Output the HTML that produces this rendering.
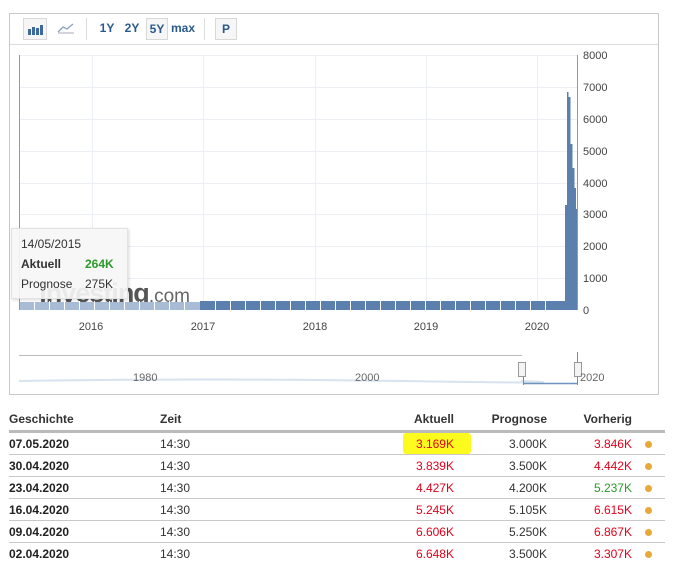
<!DOCTYPE html>
<html><head><meta charset="utf-8"><style>
body{margin:0;width:673px;height:571px;background:#fff;font-family:"Liberation Sans",Arial,sans-serif;position:relative;overflow:hidden}
.abs{position:absolute}
.btn{position:absolute;top:18px;height:20px;font-size:12px;font-weight:bold;color:#2a5a8c;line-height:20px;text-align:center}
.box{border:1px solid #d8d8d8;background:#f6f6f6}
table{position:absolute;left:9px;top:408px;width:656px;border-collapse:collapse;font-size:12px}
td,th{height:21px;padding:0;border-bottom:1px solid #c8c8c8}
th{font-weight:bold;color:#333;text-align:left;height:22px;border-bottom:3px solid #bbb}
td.d{font-weight:bold;color:#222}
td.t{color:#333}
.r{text-align:right}
.red{color:#e3001b}.grn{color:#2b9a2b}
.dot{display:inline-block;width:7px;height:7px;border-radius:50%;background:#e8a93a}
</style></head><body>
<div class="abs" style="left:9px;top:13px;width:648px;height:380px;border:1px solid #c8c8c8"></div>
<div class="abs" style="left:10px;top:44px;width:648px;height:1px;background:#ddd"></div>
<div class="btn box" style="left:23px;width:22px"><svg width="16" height="12" viewBox="0 0 16 12" style="margin-top:4px"><rect x="1" y="6" width="3" height="6" fill="#3d6a9a"/><rect x="5" y="4" width="3" height="8" fill="#3d6a9a"/><rect x="9" y="5" width="3" height="7" fill="#3d6a9a"/><rect x="13" y="2" width="3" height="10" fill="#3d6a9a"/></svg></div>
<div class="btn" style="left:55px;width:22px"><svg width="18" height="12" viewBox="0 0 18 12" style="margin-top:4px"><path d="M1 10 L6 5 L10 7 L16 2" stroke="#8aa3c0" fill="none" stroke-width="1.3"/><path d="M1 11 H17" stroke="#aab" stroke-width="1"/></svg></div>
<div class="abs" style="left:86px;top:18px;width:1px;height:22px;background:#ddd"></div>
<div class="btn" style="left:97px;width:20px">1Y</div>
<div class="btn" style="left:122px;width:20px">2Y</div>
<div class="btn box" style="left:146px;width:20px">5Y</div>
<div class="btn" style="left:169px;width:28px">max</div>
<div class="abs" style="left:204px;top:18px;width:1px;height:22px;background:#ddd"></div>
<div class="btn box" style="left:215px;width:20px">P</div>

<svg class="abs" style="left:0;top:0" width="673" height="400">
<g stroke="#eceff3" stroke-width="1">
<line x1="19" y1="55.5" x2="577" y2="55.5"/><line x1="19" y1="87.5" x2="577" y2="87.5"/><line x1="19" y1="119.5" x2="577" y2="119.5"/><line x1="19" y1="151.5" x2="577" y2="151.5"/><line x1="19" y1="183.5" x2="577" y2="183.5"/><line x1="19" y1="214.5" x2="577" y2="214.5"/><line x1="19" y1="246.5" x2="577" y2="246.5"/><line x1="19" y1="278.5" x2="577" y2="278.5"/>
<line x1="92.5" y1="55" x2="92.5" y2="310"/><line x1="203.5" y1="55" x2="203.5" y2="310"/><line x1="315.5" y1="55" x2="315.5" y2="310"/><line x1="426.5" y1="55" x2="426.5" y2="310"/><line x1="537.5" y1="55" x2="537.5" y2="310"/>
</g>
<line x1="19.5" y1="55" x2="19.5" y2="310" stroke="#999"/>
<text x="190" y="302" text-anchor="end" font-size="27" font-weight="bold" fill="#555" font-family="Liberation Sans" letter-spacing="-1">investing<tspan font-weight="normal" font-size="19" fill="#666" letter-spacing="0">.com</tspan></text>
<rect x="20" y="302" width="180" height="8" fill="#a9bcd6"/>
<rect x="200" y="301" width="365" height="9" fill="#5b80ad"/>
<g stroke="#fff" stroke-width="1">
<line x1="34.5" y1="301" x2="34.5" y2="310"/><line x1="49.5" y1="301" x2="49.5" y2="310"/><line x1="64.5" y1="301" x2="64.5" y2="310"/><line x1="79.5" y1="301" x2="79.5" y2="310"/><line x1="94.5" y1="301" x2="94.5" y2="310"/><line x1="109.5" y1="301" x2="109.5" y2="310"/><line x1="124.5" y1="301" x2="124.5" y2="310"/><line x1="139.5" y1="301" x2="139.5" y2="310"/><line x1="154.5" y1="301" x2="154.5" y2="310"/><line x1="169.5" y1="301" x2="169.5" y2="310"/><line x1="184.5" y1="301" x2="184.5" y2="310"/>
<line x1="215.5" y1="301" x2="215.5" y2="310"/><line x1="230.5" y1="301" x2="230.5" y2="310"/><line x1="245.5" y1="301" x2="245.5" y2="310"/><line x1="260.5" y1="301" x2="260.5" y2="310"/><line x1="275.5" y1="301" x2="275.5" y2="310"/><line x1="290.5" y1="301" x2="290.5" y2="310"/><line x1="305.5" y1="301" x2="305.5" y2="310"/><line x1="320.5" y1="301" x2="320.5" y2="310"/><line x1="335.5" y1="301" x2="335.5" y2="310"/><line x1="350.5" y1="301" x2="350.5" y2="310"/><line x1="365.5" y1="301" x2="365.5" y2="310"/><line x1="380.5" y1="301" x2="380.5" y2="310"/><line x1="395.5" y1="301" x2="395.5" y2="310"/><line x1="410.5" y1="301" x2="410.5" y2="310"/><line x1="425.5" y1="301" x2="425.5" y2="310"/><line x1="440.5" y1="301" x2="440.5" y2="310"/><line x1="455.5" y1="301" x2="455.5" y2="310"/><line x1="470.5" y1="301" x2="470.5" y2="310"/><line x1="485.5" y1="301" x2="485.5" y2="310"/><line x1="500.5" y1="301" x2="500.5" y2="310"/><line x1="515.5" y1="301" x2="515.5" y2="310"/><line x1="530.5" y1="301" x2="530.5" y2="310"/><line x1="545.5" y1="301" x2="545.5" y2="310"/>
</g>
<g fill="#5b80ad">
<rect x="565" y="205" width="2" height="105"/><rect x="567" y="92" width="1.5" height="218"/><rect x="568.5" y="97" width="2" height="213"/><rect x="570.5" y="144" width="2" height="166"/><rect x="572.5" y="168" width="2" height="142"/><rect x="574.5" y="188" width="1.5" height="122"/><rect x="576" y="209" width="1.5" height="101"/>
</g>
<line x1="577.5" y1="55" x2="577.5" y2="310" stroke="#999"/>
<g font-size="11" fill="#444" font-family="Liberation Sans">
<text x="583" y="59">8000</text><text x="583" y="91">7000</text><text x="583" y="123">6000</text><text x="583" y="155">5000</text><text x="583" y="187">4000</text><text x="583" y="218">3000</text><text x="583" y="250">2000</text><text x="583" y="282">1000</text><text x="583" y="314">0</text>
<g text-anchor="middle"><text x="91" y="330">2016</text><text x="203" y="330">2017</text><text x="315" y="330">2018</text><text x="426" y="330">2019</text><text x="537" y="330">2020</text></g>
</g>
<line x1="19" y1="355.5" x2="522" y2="355.5" stroke="#bbb"/>
<path d="M19 381 Q200 378 400 381 T521 381" stroke="#d8e3ef" fill="none" stroke-width="2"/>
<path d="M523 383.5 H577" stroke="#6f93bd" stroke-width="1.5"/>
<line x1="523.5" y1="375" x2="523.5" y2="385" stroke="#888"/>
<line x1="577.5" y1="352" x2="577.5" y2="385" stroke="#888"/>
<rect x="518.5" y="362.5" width="7" height="14" fill="#f4f4f4" stroke="#999"/>
<rect x="574.5" y="362.5" width="7" height="14" fill="#f4f4f4" stroke="#999"/>
<g font-size="11" fill="#666" font-family="Liberation Sans"><text x="133" y="381">1980</text><text x="355" y="381">2000</text><text x="580" y="381">2020</text></g>
</svg>

<div class="abs" style="left:11px;top:228px;width:115px;height:69px;background:rgba(246,246,246,0.92);border:1px solid #e2e2e2;box-shadow:1px 1px 3px rgba(0,0,0,0.15);font-size:12px;color:#333">
<div class="abs" style="left:9px;top:8px">14/05/2015</div>
<div class="abs" style="left:9px;top:28px;font-weight:bold">Aktuell</div>
<div class="abs" style="left:73px;top:28px;font-weight:bold;color:#2b9a2b">264K</div>
<div class="abs" style="left:9px;top:48px">Prognose</div>
<div class="abs" style="left:73px;top:48px">275K</div>
</div>

<div class="abs" style="left:403px;top:433px;width:68px;height:21px;background:#fdfb1e;border-radius:3px"></div>
<table>
<tr><th style="width:151px">Geschichte</th><th style="width:200px">Zeit</th><th class="r" style="width:94px">Aktuell</th><th class="r" style="width:93px">Prognose</th><th class="r" style="width:85px">Vorherig</th><th></th></tr>
<tr><td class="d">07.05.2020</td><td class="t">14:30</td><td class="r red">3.169K</td><td class="r t">3.000K</td><td class="r red">3.846K</td><td style="text-align:center"><span class="dot"></span></td></tr>
<tr><td class="d">30.04.2020</td><td class="t">14:30</td><td class="r red">3.839K</td><td class="r t">3.500K</td><td class="r red">4.442K</td><td style="text-align:center"><span class="dot"></span></td></tr>
<tr><td class="d">23.04.2020</td><td class="t">14:30</td><td class="r red">4.427K</td><td class="r t">4.200K</td><td class="r grn">5.237K</td><td style="text-align:center"><span class="dot"></span></td></tr>
<tr><td class="d">16.04.2020</td><td class="t">14:30</td><td class="r red">5.245K</td><td class="r t">5.105K</td><td class="r red">6.615K</td><td style="text-align:center"><span class="dot"></span></td></tr>
<tr><td class="d">09.04.2020</td><td class="t">14:30</td><td class="r red">6.606K</td><td class="r t">5.250K</td><td class="r red">6.867K</td><td style="text-align:center"><span class="dot"></span></td></tr>
<tr><td class="d" style="border:0">02.04.2020</td><td class="t" style="border:0">14:30</td><td class="r red" style="border:0">6.648K</td><td class="r t" style="border:0">3.500K</td><td class="r red" style="border:0">3.307K</td><td style="text-align:center;border:0"><span class="dot"></span></td></tr>
</table>
</body></html>
